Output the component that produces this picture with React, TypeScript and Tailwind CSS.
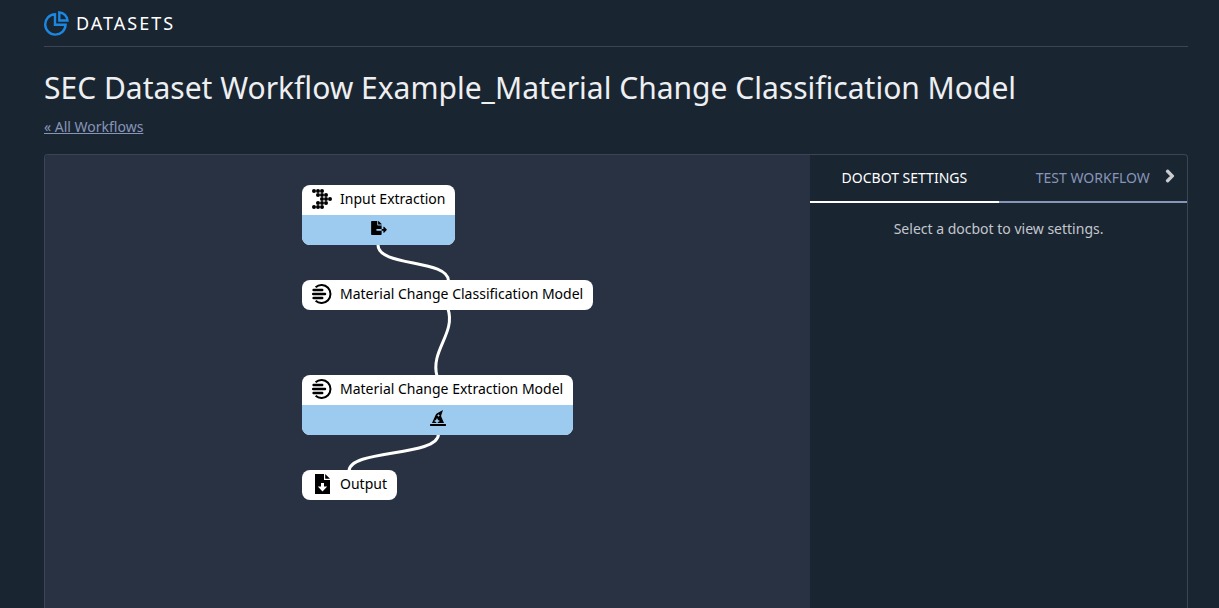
import type { ReactNode } from "react";
import { FaChevronRight, FaFileExport, FaHatWizard } from "react-icons/fa";

function PieLogo() {
  return (
    <svg className="h-[25px] w-[25px]" viewBox="0 0 25 25" fill="none" stroke="#1b87e0" strokeWidth="2.4" aria-hidden="true">
      <path d="M11 3.2A10.2 10.2 0 1 0 21.6 13.8H11Z" />
      <path d="M15.3 1.4V9.5h8.2A8.8 8.8 0 0 0 15.3 1.4Z" />
    </svg>
  );
}

const dots = [
  [2, 2], [6, 2], [10, 2],
  [6, 6], [10, 6], [14, 6],
  [10, 10], [14, 10], [18, 10],
  [6, 14], [10, 14], [14, 14],
  [2, 18], [6, 18], [10, 18],
];

function InputIcon() {
  return (
    <svg className="h-5 w-5 shrink-0" viewBox="0 0 20 20" aria-hidden="true">
      {dots.map(([x, y]) => (
        <circle key={`${x}-${y}`} cx={x} cy={y} r="2" />
      ))}
    </svg>
  );
}

function ModelIcon() {
  return (
    <svg className="h-5 w-5 shrink-0" viewBox="0 0 20 20" fill="none" stroke="#000" aria-hidden="true">
      <path d="M3.6 3.2A9 9 0 1 1 3.6 16.8" strokeWidth="2" />
      <path d="M1.6 6h8.6M1.2 10h11.8M1.6 14h8.6" strokeWidth="2.5" strokeLinecap="round" />
    </svg>
  );
}

function OutputIcon() {
  return (
    <svg className="h-5 w-5 shrink-0" viewBox="0 0 20 20" aria-hidden="true">
      <path d="M3 0h9v6h6v14H3Z" />
      <path d="M13.2 0 18 4.8h-4.8Z" />
      <path d="M9 9h3v3.6h3.2l-4.7 4.8L5.8 12.6H9Z" fill="#fff" />
    </svg>
  );
}

type NodeProps = { place: string; icon: ReactNode; label: string; action?: ReactNode };

function WorkflowNode({ place, icon, label, action }: NodeProps) {
  return (
    <button type="button" className={`absolute overflow-hidden rounded-lg bg-white text-black ${place}`}>
      <span className="flex h-[30px] items-center gap-2 px-[10px] pb-[2px] text-sm whitespace-nowrap">
        {icon}
        <span>{label}</span>
      </span>
      {action && <span className="flex h-[30px] items-center justify-center bg-[#9dcbf0] pb-1">{action}</span>}
    </button>
  );
}

export default function App() {
  return (
    <div className="flex min-h-screen flex-col bg-[#1a2532] pr-[31px] pl-11 font-['Noto_Sans',sans-serif] text-[#eeeff1]">
      <header className="flex h-[47px] items-center gap-[7px] border-b border-[#3b4556]">
        <PieLogo />
        <span className="text-lg tracking-[2px] text-white">DATASETS</span>
      </header>

      <h1 className="mt-5 text-[30px] leading-[42px]">
        SEC Dataset Workflow Example_Material Change Classification Model
      </h1>
      <nav className="mt-2 text-sm">
        <a href="#workflows" className="text-[#8795b8] underline">« All Workflows</a>
      </nav>

      <main className="mt-[17px] flex flex-1 rounded-t border border-b-0 border-[#3b4556]">
        <section aria-label="Workflow" className="relative min-h-[440px] flex-1 overflow-hidden rounded-tl bg-[#293243]">
          <svg className="absolute top-0 left-0 h-[400px] w-[600px]" viewBox="0 0 600 400" fill="none" stroke="#fff" strokeWidth="3" aria-hidden="true">
            <path d="M333 90C333 112 403.5 104 403.5 126" />
            <path d="M403 154C411 178 385 196 392 221" />
            <path d="M393.5 279C393.5 302 304 294 304 316" />
          </svg>
          <WorkflowNode
            place="left-[257px] top-[30px]"
            icon={<InputIcon />}
            label="Input Extraction"
            action={<FaFileExport className="h-[14px] w-4" aria-hidden="true" />}
          />
          <WorkflowNode place="left-[257px] top-[125px]" icon={<ModelIcon />} label="Material Change Classification Model" />
          <WorkflowNode
            place="left-[257px] top-[220px]"
            icon={<ModelIcon />}
            label="Material Change Extraction Model"
            action={<FaHatWizard className="h-4 w-4" aria-hidden="true" />}
          />
          <WorkflowNode place="left-[257px] top-[315px]" icon={<OutputIcon />} label="Output" />
        </section>

        <aside className="w-[33%] text-sm">
          <div role="tablist" className="relative flex h-12">
            <button type="button" role="tab" aria-selected="true" className="flex-1 border-b-2 border-white text-white">
              DOCBOT SETTINGS
            </button>
            <button type="button" role="tab" aria-selected="false" className="flex-1 border-b-2 border-[#8795b8] text-[#8795b8]">
              TEST WORKFLOW
            </button>
            <button type="button" aria-label="Next tabs" className="absolute top-[14px] right-3 text-[#c9ccd1]">
              <FaChevronRight className="h-[14px] w-[10px] stroke-current" strokeWidth="40" />
            </button>
          </div>
          <p className="mt-4 text-center text-[#c3c7cd]">Select a docbot to view settings.</p>
        </aside>
      </main>
    </div>
  );
}
